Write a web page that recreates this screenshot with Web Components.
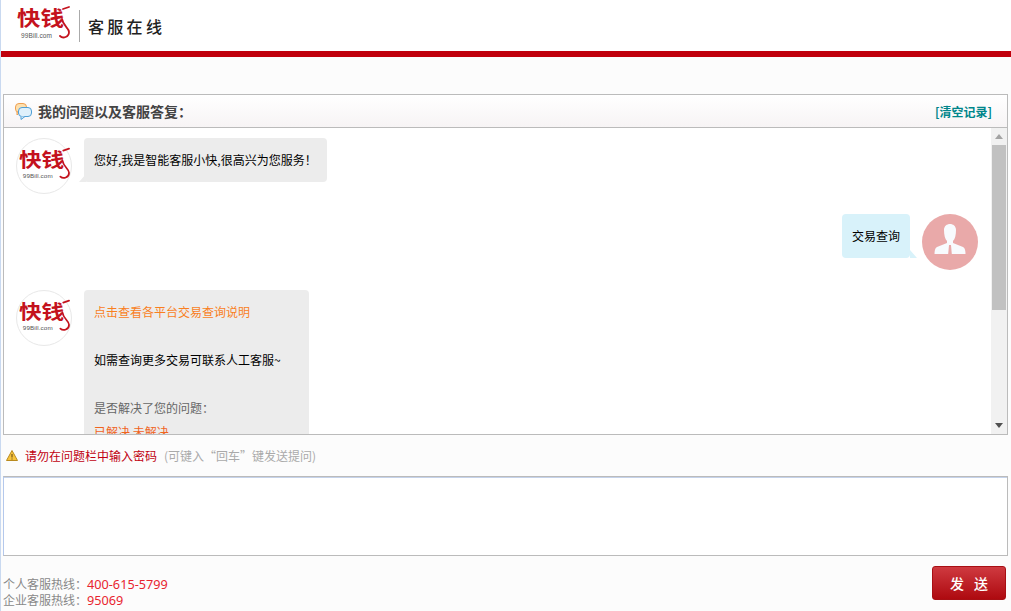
<!DOCTYPE html>
<html lang="zh-CN">
<head>
<meta charset="utf-8">
<title>客服在线</title>
<style>
  html, body { margin: 0; height: 100%; }
  body {
    background: #fcfcfc;
    border-left: 1px solid #c9d9f0;
    box-sizing: border-box;
    overflow: hidden;
    font: 12px "Noto Sans CJK SC", "Liberation Sans", sans-serif;
    color: #000;
  }
</style>
</head>
<body>
<kq-header></kq-header>
<kq-panel title="我的问题以及客服答复：">
  <chat-row from="bot"><span>您好,我是智能客服小快,很高兴为您服务！</span></chat-row>
  <chat-row from="user"><span>交易查询</span></chat-row>
  <chat-row from="bot">
    <div style="width:205px;color:#f97f1e">点击查看各平台交易查询说明</div>
    <br>
    <div>如需查询更多交易可联系人工客服~</div>
    <br>
    <div style="color:#666">是否解决了您的问题：</div>
    <div style="color:#f0641e">已解决 未解决</div>
  </chat-row>
</kq-panel>
<kq-notice></kq-notice>
<kq-composer></kq-composer>
<kq-footer></kq-footer>

<script>
const logoSvg = /* html */`
  <svg viewBox="0 -4 54 42" width="100%" height="100%" aria-label="快钱">
    <text x="1" y="19" font-family="'Noto Sans CJK SC', sans-serif" font-weight="700" font-size="20" fill="#c4121d" textLength="47" lengthAdjust="spacingAndGlyphs">快钱</text>
    <path d="M46 12 C47 19 53 21 53 25 C53 30 47 32 44 29 M47 2 L53 0" fill="none" stroke="#c4121d" stroke-width="1.8" stroke-linecap="round"/>
    <text x="5" y="31" font-family="'Liberation Sans', sans-serif" font-size="6.5" fill="#555" textLength="31">99Bill.com</text>
  </svg>`;

class KqHeader extends HTMLElement {
  constructor(){
    super();
    this.attachShadow({mode: 'open'});
  }

  connectedCallback(){
    this.shadowRoot.innerHTML = /* html */`
    <style>
      :host {
        display: flex;
        align-items: center;
        height: 51px;
        padding-left: 15px;
        background: #fff;
        border-bottom: 6px solid #c0000c;
      }
      .logo { width: 54px; height: 42px; margin-bottom: 4px; }
      .divider { width: 1px; height: 32px; margin: 0 8px 0 9px; background: #aaa; }
      .name {
        font: 500 16px "Noto Sans CJK SC", sans-serif;
        letter-spacing: 3.3px;
        color: #222;
      }
    </style>
    <div class="logo">${logoSvg}</div>
    <div class="divider"></div>
    <div class="name">客服在线</div>
    `;
  }
}
customElements.define('kq-header', KqHeader);

class KqPanel extends HTMLElement {
  constructor(){
    super();
    this.attachShadow({mode: 'open'});
  }

  connectedCallback(){
    this.shadowRoot.innerHTML = /* html */`
    <style>
      :host {
        display: block;
        margin: 37px 3px 0 2px;
        height: 341px;
        box-sizing: border-box;
        border: 1px solid #bbb;
        background: #fff;
      }
      .bar {
        display: flex;
        align-items: center;
        height: 32px;
        padding: 0 15px 0 11px;
        border-bottom: 1px solid #bbb;
        background: linear-gradient(#fff, #f7f4f5);
      }
      .bar svg { margin-right: 6px; }
      .title { flex: 1; font-size: 14px; font-weight: 700; color: #444; }
      .clear { font-size: 12px; font-weight: 700; color: #00868b; }
      .body { display: flex; height: 306px; }
      .list { flex: 1; min-width: 0; overflow: hidden; }
      .scroll {
        display: flex;
        flex-direction: column;
        width: 16px;
        background: #f1f1f1;
      }
      .arrow { height: 17px; display: flex; align-items: center; justify-content: center; }
      .thumb { height: 165px; background: #c1c1c1; margin: 0 1px; }
      .track { flex: 1; }
      .up { border: 4px solid transparent; border-top: 0; border-bottom: 5px solid #a3a3a3; }
      .down { border: 4px solid transparent; border-bottom: 0; border-top: 5px solid #505050; }
    </style>
    <div class="bar">
      <svg width="17" height="17" viewBox="0 0 17 17">
        <rect x=".5" y=".5" width="11" height="9" rx="3.5" fill="#fde0ae" stroke="#ee9f52"/>
        <path d="M2 9 L2 12 L5 9Z" fill="#fde0ae" stroke="#ee9f52" stroke-linejoin="round"/>
        <rect x="3.5" y="4.5" width="13" height="9" rx="3.5" fill="#dff0fb" stroke="#4f9fd6"/>
        <path d="M6 13.5 V16.5 L10 13.5" fill="#dff0fb" stroke="#4f9fd6" stroke-linejoin="round"/>
        <path d="M6.5 12.5 H10" stroke="#dff0fb"/>
      </svg>
      <div class="title">${this.getAttribute('title')}</div>
      <div class="clear">[清空记录]</div>
    </div>
    <div class="body">
      <div class="list"><slot></slot></div>
      <div class="scroll">
        <div class="arrow"><div class="up"></div></div>
        <div class="thumb"></div>
        <div class="track"></div>
        <div class="arrow"><div class="down"></div></div>
      </div>
    </div>
    `;
  }
}
customElements.define('kq-panel', KqPanel);

class ChatRow extends HTMLElement {
  constructor(){
    super();
    this.attachShadow({mode: 'open'});
  }

  connectedCallback(){
    const isUser = this.getAttribute('from') === 'user';
    const avatar = isUser ? /* html */`
      <svg width="56" height="56" viewBox="0 0 56 56">
        <circle cx="28" cy="28" r="28" fill="#e9a9a9"/>
        <path d="M22 16 C22 8 34 8 34 16 C34 21 33 25 31 27 V29 L41 33 C43 34 43.500 37 43.500 40 H12.500 C12.500 37 13 34 15 33 L25 29 V27 C23 25 22 21 22 16Z" fill="#f8fbfe"/>
        <path d="M27 31 H29 L29.800 40 H26.200Z" fill="#e9a9a9"/>
      </svg>` : /* html */`
      <div class="bot">${logoSvg}</div>`;
    this.shadowRoot.innerHTML = /* html */`
    <style>
      :host {
        display: flex;
        flex-direction: ${isUser ? 'row-reverse' : 'row'};
        align-items: flex-start;
        gap: 12px;
        padding: ${isUser ? '0 13px 20px 0' : '0 0 20px 12px'};
      }
      :host(:first-child) { padding-top: 10px; }
      .avatar { flex: none; width: 56px; height: 56px; }
      .bot {
        box-sizing: border-box;
        width: 56px;
        height: 56px;
        padding: 5px 1px 7px 1px;
        border: 1px solid #e8e8e8;
        border-radius: 50%;
        background: #fff;
      }
      .bubble {
        position: relative;
        padding: 10px;
        line-height: 24px;
        border-radius: 4px;
        background: ${isUser ? '#d8f2fa' : '#ececec'};
        color: #000;
      }
      .bubble::after {
        content: "";
        position: absolute;
        bottom: 0;
        ${isUser ? 'right: -7px' : 'left: -5px'};
        width: 7px;
        height: 8px;
        background: ${isUser ? '#d8f2fa' : '#ececec'};
        clip-path: ${isUser ? 'polygon(0 0, 100% 100%, 0 100%)' : 'polygon(100% 0, 100% 100%, 0 100%)'};
      }
    </style>
    <div class="avatar">${avatar}</div>
    <div class="bubble"><slot></slot></div>
    `;
  }
}
customElements.define('chat-row', ChatRow);

class KqNotice extends HTMLElement {
  constructor(){
    super();
    this.attachShadow({mode: 'open'});
  }

  connectedCallback(){
    this.shadowRoot.innerHTML = /* html */`
    <style>
      :host {
        display: flex;
        align-items: center;
        height: 41px;
        padding-left: 5px;
        font-size: 12px;
      }
      svg { margin-right: 7px; }
      .warn { color: #c00010; }
      .tip { margin-left: 7px; color: #aaa; }
    </style>
    <svg width="12" height="11" viewBox="0 0 12 11">
      <path d="M6 .5 L11.500 10.500 H.5Z" fill="#f7c33c" stroke="#b98a1e"/>
      <path d="M6 4 V7.500 M6 8.500 V9.500" stroke="#5b4310"/>
    </svg>
    <span class="warn">请勿在问题栏中输入密码</span>
    <span class="tip">(可键入“回车”键发送提问)</span>
    `;
  }
}
customElements.define('kq-notice', KqNotice);

class KqComposer extends HTMLElement {
  constructor(){
    super();
    this.attachShadow({mode: 'open'});
  }

  connectedCallback(){
    this.shadowRoot.innerHTML = /* html */`
    <style>
      :host { display: block; margin: 0 3px 0 2px; }
      textarea {
        display: block;
        box-sizing: border-box;
        width: 100%;
        height: 80px;
        padding: 4px;
        resize: none;
        outline: none;
        background: #fff;
        border: 1px solid #bbb;
        border-left-color: #b4c8ec;
        box-shadow: inset 0 1px 0 #c4d2ea;
      }
    </style>
    <textarea></textarea>
    `;
  }
}
customElements.define('kq-composer', KqComposer);

class KqFooter extends HTMLElement {
  constructor(){
    super();
    this.attachShadow({mode: 'open'});
  }

  connectedCallback(){
    this.shadowRoot.innerHTML = /* html */`
    <style>
      :host {
        display: flex;
        justify-content: space-between;
        margin: 10px 5px 0 2px;
        color: #888;
        font-size: 12px;
        line-height: 16px;
      }
      .lines { padding-top: 10px; }
      .lines div { height: 16px; }
      b { font: 400 12.7px/1 "Noto Sans", sans-serif; color: #e8252f; }
      button {
        width: 74px;
        height: 34px;
        border: 1px solid #a80f14;
        border-radius: 3px;
        background: linear-gradient(#cf3a40, #ae0a10);
        color: #fff;
        font: 500 14px "Noto Sans CJK SC", sans-serif;
        letter-spacing: 10px;
        text-indent: 10px;
      }
    </style>
    <div class="lines">
      <div>个人客服热线：<b>400-615-5799</b></div>
      <div>企业客服热线：<b>95069</b></div>
    </div>
    <button>发送</button>
    `;
  }
}
customElements.define('kq-footer', KqFooter);
</script>
</body>
</html>
